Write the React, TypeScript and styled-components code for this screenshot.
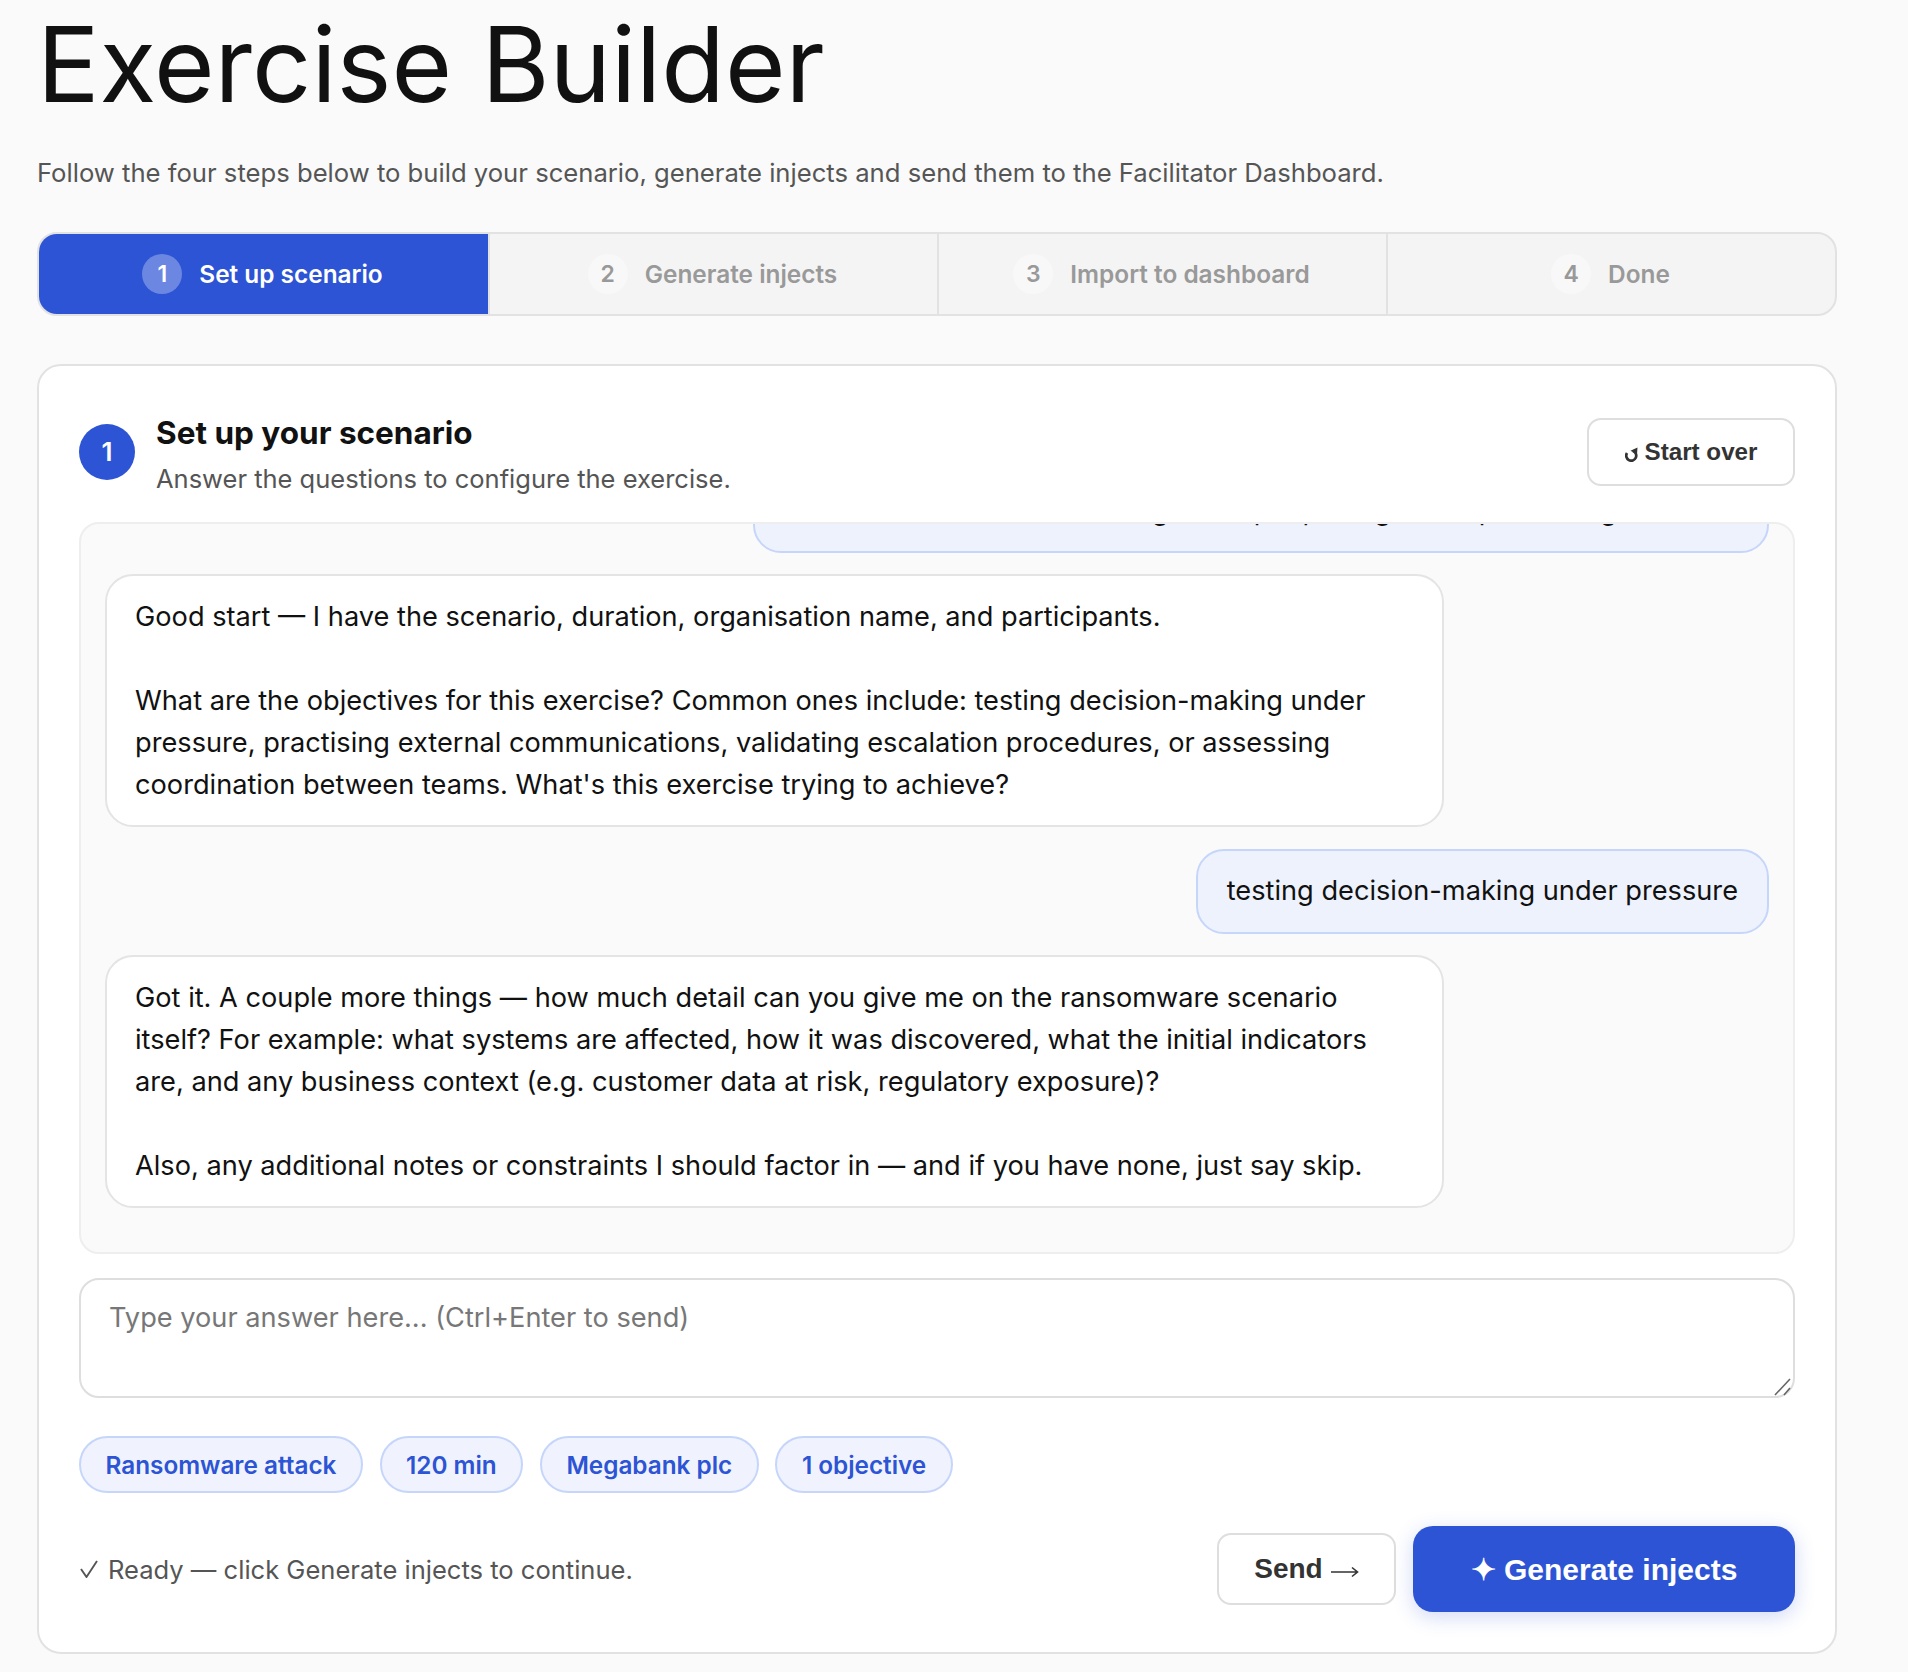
import React from 'react';
import styled, { createGlobalStyle } from 'styled-components';

const Global = createGlobalStyle`
  html, body {
    margin: 0;
    background: #fafafa;
  }
  body {
    font-family: Inter, "Noto Sans", sans-serif;
    color: #111;
    -webkit-font-smoothing: antialiased;
  }
  * { box-sizing: border-box; }
`;

const Page = styled.main`
  width: 1800px;
  height: 1672px;
  margin-left: 37px;
  overflow: hidden;
`;

const Title = styled.h1`
  margin: 0;
  font-size: 104px;
  line-height: 128px;
  font-weight: 400;
  letter-spacing: 0;
  color: #111;
`;

const Lead = styled.p`
  margin: 28px 0 42px;
  font-size: 25.65px;
  line-height: 34px;
  color: #555;
`;

const Stepper = styled.div`
  display: grid;
  grid-template-columns: repeat(4, 1fr);
  height: 84px;
  background: #f4f4f4;
  border: 2px solid #e2e2e2;
  border-radius: 20px;
  overflow: hidden;
`;

const Step = styled.div<{ $active?: boolean }>`
  display: flex;
  align-items: center;
  justify-content: center;
  gap: 17px;
  padding-right: 2px;
  font-size: 24.4px;
  font-weight: 600;
  background: ${p => (p.$active ? '#2c54d4' : 'transparent')};
  color: ${p => (p.$active ? '#fff' : '#999')};
  & + & {
    border-left: 2px solid #e2e2e2;
  }
`;

const StepNum = styled.span<{ $active?: boolean }>`
  display: flex;
  align-items: center;
  justify-content: center;
  width: 40px;
  height: 40px;
  border-radius: 50%;
  font-size: 23px;
  background: ${p => (p.$active ? 'rgba(255,255,255,0.3)' : '#f8f8f8')};
`;

const Card = styled.section`
  margin-top: 48px;
  height: 1290px;
  background: #fff;
  border: 2px solid #e2e2e2;
  border-radius: 24px;
  padding: 33px 40px 0;
`;

const CardHead = styled.header`
  display: flex;
  align-items: center;
  height: 105px;
  margin-bottom: 18px;
`;

const Badge = styled.span`
  display: flex;
  align-items: center;
  justify-content: center;
  flex: none;
  width: 56px;
  height: 56px;
  border-radius: 50%;
  background: #2c54d4;
  color: #fff;
  font-size: 26px;
  font-weight: 600;
`;

const HeadText = styled.div`
  flex: 1;
  margin-left: 21px;
  padding-top: 5px;
`;

const CardTitle = styled.h2`
  margin: 0;
  font-size: 31.5px;
  line-height: 42px;
  font-weight: 700;
  color: #111;
`;

const CardSub = styled.p`
  margin: 7px 0 0;
  font-size: 25.5px;
  line-height: 36px;
  color: #555;
`;

const GhostButton = styled.button<{ $tall?: boolean }>`
  display: flex;
  align-items: center;
  justify-content: center;
  gap: ${p => (p.$tall ? '8px' : '6px')};
  font-family: "Liberation Sans", Arial, sans-serif;
  font-weight: 700;
  color: #333;
  background: #fff;
  border: 2px solid #dedede;
  border-radius: 14px;
  font-size: ${p => (p.$tall ? '28px' : '24.2px')};
  height: ${p => (p.$tall ? '72px' : '68px')};
  padding: 0;
  width: ${p => (p.$tall ? '179px' : '208px')};
`;

const Chat = styled.div`
  height: 732px;
  display: flex;
  flex-direction: column;
  justify-content: flex-end;
  gap: 21.5px;
  padding: 0 24px 44px 24px;
  background: #fafafa;
  border: 2px solid #eee;
  border-radius: 20px;
  overflow: hidden;
`;

const Bubble = styled.div<{ $user?: boolean }>`
  flex: none;
  align-self: ${p => (p.$user ? 'flex-end' : 'flex-start')};
  width: ${p => (p.$user ? 'auto' : '1339px')};
  padding: 19.5px ${p => (p.$user ? '29px' : '28px')};
  font-size: 27.2px;
  line-height: 42px;
  color: #111;
  white-space: pre-wrap;
  background: ${p => (p.$user ? '#eef2fd' : '#fff')};
  border: 2px solid ${p => (p.$user ? '#c6d6fa' : '#e4e4e4')};
  border-radius: 28px;
`;

const ClippedBubble = styled(Bubble)`
  width: 1016px;
  padding-bottom: 19px;
`;

const AnswerBox = styled.div`
  position: relative;
  margin-top: 24px;
`;

const Answer = styled.textarea`
  display: block;
  width: 100%;
  height: 120px;
  padding: 20px 28px;
  font-family: inherit;
  font-size: 27.2px;
  line-height: 36px;
  color: #111;
  background: #fff;
  border: 2px solid #dedede;
  border-radius: 20px;
  outline: none;
  resize: none;
  &::placeholder {
    color: #777;
  }
`;

const Grip = styled.svg`
  position: absolute;
  right: 3px;
  bottom: 2px;
  pointer-events: none;
`;

const Chips = styled.div`
  display: flex;
  gap: 16.7px;
  margin-top: 38px;
`;

const Chip = styled.span`
  display: flex;
  align-items: center;
  height: 57px;
  padding: 0 24.5px;
  font-size: 24.3px;
  font-weight: 600;
  color: #2c54d4;
  background: #f0f3fe;
  border: 2px solid #c6d6fa;
  border-radius: 29px;
`;

const Footer = styled.footer`
  display: flex;
  align-items: center;
  margin-top: 33px;
`;

const Status = styled.span`
  display: flex;
  align-items: center;
  gap: 10px;
  flex: 1;
  padding-left: 1px;
  font-size: 25.55px;
  color: #555;
`;

const PrimaryButton = styled.button`
  width: 382px;
  height: 86px;
  margin-left: 17px;
  font-family: "Liberation Sans", Arial, sans-serif;
  font-size: 30px;
  font-weight: 700;
  color: #fff;
  background: #2c54d4;
  border: 0;
  border-radius: 20px;
  box-shadow: 0 5px 20px rgba(44, 84, 212, 0.22);
`;

const steps = ['Set up scenario', 'Generate injects', 'Import to dashboard', 'Done'];
const chips = ['Ransomware attack', '120 min', 'Megabank plc', '1 objective'];

export default function App() {
  return (
    <>
      <Global />
      <Page>
        <Title>Exercise Builder</Title>
        <Lead>Follow the four steps below to build your scenario, generate injects and send them to the Facilitator Dashboard.</Lead>
        <Stepper>
          {steps.map((label, i) => (
            <Step key={label} $active={i === 0}>
              <StepNum $active={i === 0}>{i + 1}</StepNum>
              {label}
            </Step>
          ))}
        </Stepper>
        <Card>
          <CardHead>
            <Badge>1</Badge>
            <HeadText>
              <CardTitle>Set up your scenario</CardTitle>
              <CardSub>Answer the questions to configure the exercise.</CardSub>
            </HeadText>
            <GhostButton>
              <svg width="14" height="15" viewBox="0 0 14 15" style={{ marginTop: 5 }}>
                <path d="M2 6 A5 5 0 1 0 8 4" fill="none" stroke="#333" strokeWidth="2.7" />
                <path d="M5.5 3.8 L12.5 0.4 L12 7.2 Z" fill="#333" />
              </svg>
              Start over
            </GhostButton>
          </CardHead>
          <Chat>
            <ClippedBubble $user>
              {'Ransomware attack on core banking, 120 minutes, Megabank plc.\nAttendees are CIO and the legal and people & general products guild'}
            </ClippedBubble>
            <Bubble>
              {"Good start — I have the scenario, duration, organisation name, and participants.\n\nWhat are the objectives for this exercise? Common ones include: testing decision-making under pressure, practising external communications, validating escalation procedures, or assessing coordination between teams. What's this exercise trying to achieve?"}
            </Bubble>
            <Bubble $user>testing decision-making under pressure</Bubble>
            <Bubble>
              {'Got it. A couple more things — how much detail can you give me on the ransomware scenario itself? For example: what systems are affected, how it was discovered, what the initial indicators are, and any business context (e.g. customer data at risk, regulatory exposure)?\n\nAlso, any additional notes or constraints I should factor in — and if you have none, just say skip.'}
            </Bubble>
          </Chat>
          <AnswerBox>
            <Answer placeholder="Type your answer here... (Ctrl+Enter to send)" />
            <Grip width="18" height="18" viewBox="0 0 18 18">
              <path d="M1 17 L16 1 M10 17 L16 10" stroke="#666" strokeWidth="1.6" fill="none" />
            </Grip>
          </AnswerBox>
          <Chips>
            {chips.map(c => (
              <Chip key={c}>{c}</Chip>
            ))}
          </Chips>
          <Footer>
            <Status>
              <svg width="18" height="18" viewBox="0 0 18 18">
                <path d="M1 9 L6.5 17 L17 1" fill="none" stroke="#555" strokeWidth="1.9" />
              </svg>
              Ready — click Generate injects to continue.
            </Status>
            <GhostButton $tall>
              Send
              <svg width="28" height="14" viewBox="0 0 28 14" style={{ marginTop: 5 }}>
                <path d="M0 7 H26 M21 2.5 L26.5 7 L21 11.5" fill="none" stroke="#333" strokeWidth="1.6" />
              </svg>
            </GhostButton>
            <PrimaryButton>✦ Generate injects</PrimaryButton>
          </Footer>
        </Card>
      </Page>
    </>
  );
}
